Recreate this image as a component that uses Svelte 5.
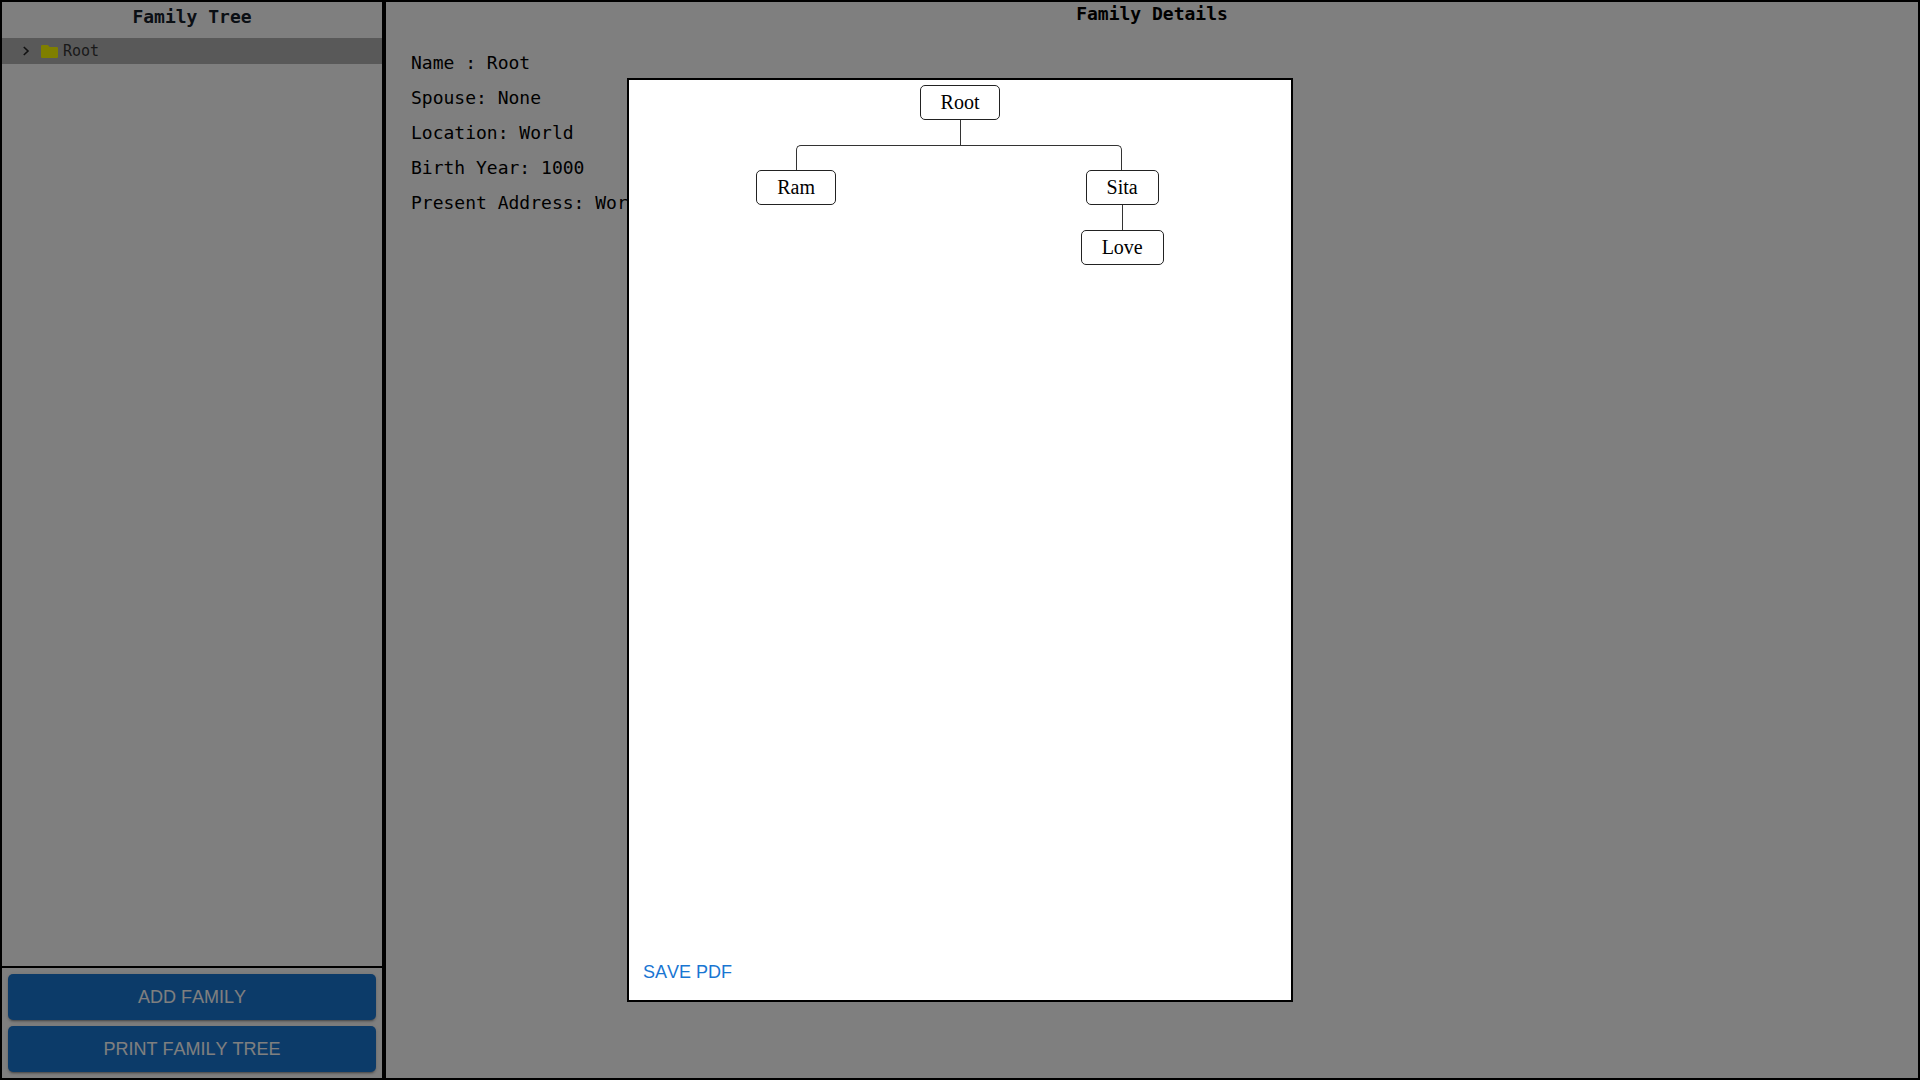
<script>
  const details = [
    ['Name ', 'Root'],
    ['Spouse', 'None'],
    ['Location', 'World'],
    ['Birth Year', '1000'],
    ['Present Address', 'World'],
  ];

  const tree = {
    name: 'Root',
    children: [{ name: 'Ram' }, { name: 'Sita', children: [{ name: 'Love' }] }],
  };
</script>

{#snippet branch(node)}
  <div class="node">{node.name}</div>
  {#if node.children?.length}
    <div class="stem"></div>
    <ul class="children">
      {#each node.children as child, i}
        <li>
          {#if node.children.length > 1}
            <div class="joint">
              <span class:to-left={i > 0} class:end={i === node.children.length - 1}></span>
              <span class:to-right={i < node.children.length - 1} class:start={i === 0}></span>
            </div>
          {/if}
          {@render branch(child)}
        </li>
      {/each}
    </ul>
  {/if}
{/snippet}

<div class="page">
  <aside class="sidebar">
    <section class="browser">
      <h2>Family Tree</h2>
      <button class="tree-row" type="button" aria-expanded="false">
        <svg class="chevron" viewBox="0 0 8 12" aria-hidden="true">
          <path d="M1.8 2 L6 6 L1.8 10" fill="none" stroke="currentColor" stroke-width="1.6" />
        </svg>
        <svg class="folder" viewBox="0 0 17 13" aria-hidden="true">
          <path d="M1.2 0H6.4Q7 0 7.4 .5L8.6 2H15.8Q17 2 17 3.2V11.8Q17 13 15.8 13H1.2Q0 13 0 11.8V1.2Q0 0 1.2 0Z" fill="#ff0" />
        </svg>
        <span>Root</span>
      </button>
    </section>
    <div class="actions">
      <button class="filled" type="button">ADD FAMILY</button>
      <button class="filled" type="button">PRINT FAMILY TREE</button>
    </div>
  </aside>

  <main class="details">
    <h2>Family Details</h2>
    <div class="fields">
      {#each details as [label, value]}
        <p>{label}: {value}</p>
      {/each}
    </div>
  </main>
</div>

<div class="backdrop">
  <div class="modal" role="dialog" aria-modal="true" aria-label="Family tree">
    <div class="chart">{@render branch(tree)}</div>
    <button class="text-button" type="button">SAVE PDF</button>
  </div>
</div>

<style>
  :global(body) {
    margin: 0;
    background: #fff;
  }

  .page,
  .page *,
  .backdrop,
  .backdrop * {
    box-sizing: border-box;
  }

  .page {
    display: grid;
    grid-template-columns: 1fr 4fr;
    min-height: 100vh;
    font-family: Consolas, 'DejaVu Sans Mono', monospace;
    font-size: 18px;
    color: #000;
  }

  h2 {
    margin: 0;
    font-size: 18px;
    line-height: 24px;
    font-weight: 700;
    text-align: center;
  }

  .sidebar {
    display: flex;
    flex-direction: column;
    border: 2px solid #000;
  }

  .browser {
    flex: 1;
  }

  .browser h2 {
    padding: 3px 0 9px;
    color: #16202a;
  }

  .tree-row {
    display: flex;
    align-items: center;
    width: 100%;
    height: 26px;
    padding: 0 20px;
    border: 0;
    background: #b2b2b2;
    font-family: inherit;
    font-size: 15px;
    color: #333;
  }

  .chevron {
    width: 8px;
    height: 12px;
    margin-right: 11px;
    color: #222;
  }

  .folder {
    width: 17px;
    height: 13px;
    margin-right: 5px;
  }

  .actions {
    display: flex;
    flex-direction: column;
    gap: 6px;
    padding: 6px;
    border-top: 2px solid #000;
  }

  .filled,
  .text-button {
    height: 46px;
    border: 0;
    font-family: 'Liberation Sans', Arial, sans-serif;
    font-size: 18px;
    font-kerning: none;
  }

  .filled {
    border-radius: 5px;
    background: #1976d2;
    box-shadow:
      0 3px 1px -2px rgba(0, 0, 0, 0.2),
      0 2px 2px rgba(0, 0, 0, 0.14),
      0 1px 5px rgba(0, 0, 0, 0.12);
    color: #fff;
  }

  .text-button {
    padding: 0 9px;
    background: none;
    color: #1976d2;
  }

  .details {
    border: 2px solid #000;
  }

  .fields {
    padding: 19px 25px;
  }

  .fields p {
    margin: 0;
    line-height: 35px;
    white-space: pre;
  }

  .backdrop {
    position: fixed;
    inset: 0;
    display: flex;
    justify-content: center;
    padding: 78px 24px;
    background: rgba(0, 0, 0, 0.5);
  }

  .modal {
    display: flex;
    flex-direction: column;
    justify-content: space-between;
    align-items: flex-start;
    aspect-ratio: 111 / 154;
    padding: 5px;
    border: 2px solid #000;
    background: #fff;
  }

  .chart {
    display: flex;
    flex-direction: column;
    align-items: center;
    width: 100%;
    font-family: 'Liberation Serif', 'Times New Roman', serif;
    font-size: 20px;
    line-height: 23px;
  }

  .node {
    padding: 5px 20px;
    border: 1px solid #222;
    border-radius: 5px;
  }

  .stem {
    width: 1px;
    height: 25px;
    background: #333;
  }

  .children {
    display: flex;
    width: 100%;
    margin: 0;
    padding: 0;
    list-style: none;
  }

  .children li {
    display: flex;
    flex: auto;
    flex-direction: column;
    align-items: center;
  }

  .joint {
    display: grid;
    grid-template-columns: 1fr 1fr;
    width: 100%;
    height: 25px;
  }

  .to-left,
  .to-right {
    border-top: 1px solid #333;
  }

  .start {
    border-left: 1px solid #333;
    border-top-left-radius: 5px;
  }

  .end {
    border-right: 1px solid #333;
    border-top-right-radius: 5px;
  }
</style>
